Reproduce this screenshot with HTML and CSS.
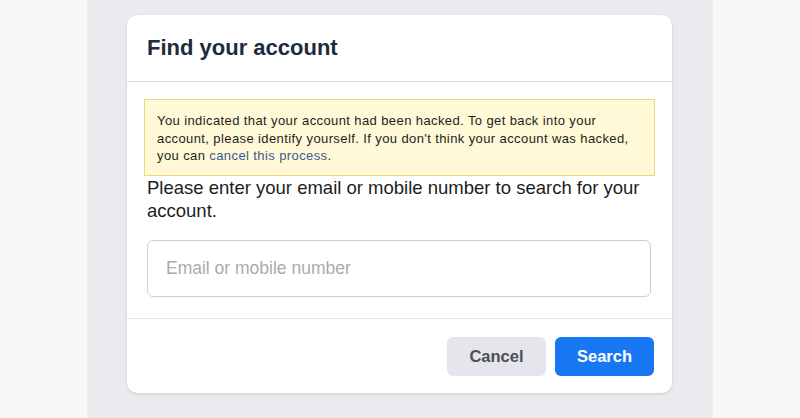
FILE: index.html
```html
<!DOCTYPE html>
<html>
<head>
<meta charset="utf-8">
<link rel="stylesheet" href="styles.css">
</head>
<body>
<div class="page">
  <div class="side"></div>
  <main class="center">
    <div class="card">
      <div class="card-header">
        <h2 class="title">Find your account</h2>
      </div>
      <div class="card-body">
        <div class="notice">You indicated that your account had been hacked. To get back into your account, please identify yourself. If you don't think your account was hacked, you can <a class="link" href="#">cancel this process</a>.</div>
        <p class="prompt">Please enter your email or mobile number to search for your account.</p>
        <input class="field" type="text" placeholder="Email or mobile number">
      </div>
      <div class="card-footer">
        <button class="btn btn-cancel">Cancel</button>
        <button class="btn btn-search">Search</button>
      </div>
    </div>
  </main>
  <div class="side"></div>
</div>
</body>
</html>
```

FILE: styles.css
```css
html, body {
  margin: 0;
  padding: 0;
  height: 100%;
}
body {
  font-family: "Liberation Sans", Arial, sans-serif;
  color: #1c1e21;
  background: #f7f7f7;
}
.page {
  display: flex;
  height: 418px;
  overflow: hidden;
}
.side {
  width: 87px;
  flex: none;
  background: #f7f7f7;
}
.center {
  flex: 1;
  background: #e9ebee;
  padding: 15px 0 0 40px;
}
.card {
  width: 545px;
  background: #fff;
  border-radius: 10px;
  box-shadow: 0 1px 3px rgba(0,0,0,0.12), 0 0 1px rgba(0,0,0,0.06);
}
.card-header {
  height: 66px;
  display: flex;
  align-items: center;
  padding: 0 20px;
  border-bottom: 1px solid #dddfe2;
}
.title {
  margin: 0;
  font-size: 22px;
  font-weight: bold;
  color: #1c2b3d;
}
.card-body {
  padding: 17px 0 21px;
  border-bottom: 1px solid #e4e6eb;
}
.notice {
  margin: 0 17px;
  padding: 12px 12px 10px;
  background: #fff9d7;
  border: 1px solid #ecd97c;
  font-size: 13px;
  letter-spacing: 0.4px;
  line-height: 17.5px;
  color: #1c1e21;
}
.link {
  color: #385898;
  text-decoration: none;
}
.prompt {
  margin: 0 20px;
  font-size: 18.5px;
  line-height: 23px;
  color: #1c1e21;
}
.field {
  display: block;
  box-sizing: border-box;
  margin: 18px 20px 0;
  width: 504px;
  height: 57px;
  border: 1px solid #ccd0d5;
  border-radius: 6px;
  padding: 0 18px;
  font-family: "Liberation Sans", Arial, sans-serif;
  font-size: 17.5px;
  color: #1c1e21;
  outline: none;
}
.field::placeholder {
  color: #a8abaf;
}
.card-footer {
  display: flex;
  justify-content: flex-end;
  gap: 9px;
  padding: 18px 18px 17px;
}
.btn {
  width: 99px;
  height: 39px;
  border: none;
  border-radius: 6px;
  font-family: "Liberation Sans", Arial, sans-serif;
  font-size: 16.5px;
  font-weight: bold;
  cursor: pointer;
}
.btn-cancel {
  background: #e4e6eb;
  color: #4b4f56;
}
.btn-search {
  background: #1877f2;
  color: #fff;
}
```
